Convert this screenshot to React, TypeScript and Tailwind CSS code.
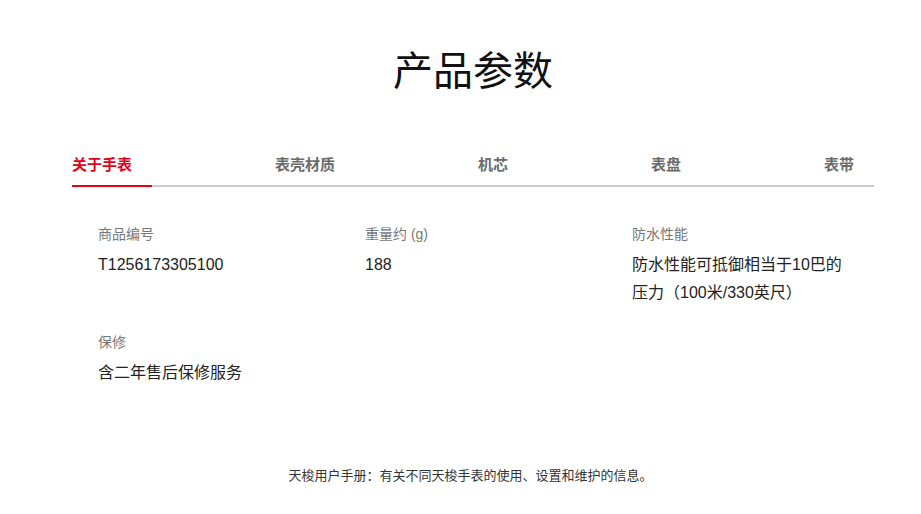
const TABS = ['关于手表', '表壳材质', '机芯', '表盘', '表带'];

const SPECS = [
  { label: '商品编号', value: 'T1256173305100' },
  { label: '重量约 (g)', value: '188' },
  { label: '防水性能', value: '防水性能可抵御相当于10巴的压力（100米/330英尺）' },
  { label: '保修', value: '含二年售后保修服务' },
];

export default function App() {
  return (
    <div
      className="min-h-[514px] w-full bg-white"
      style={{ fontFamily: '"Liberation Sans", Arial, "Noto Sans CJK SC", sans-serif' }}
    >
      <div className="ml-[72px] w-[802px]">
        {/* Title */}
        <h1 className="pt-[46px] text-center text-[40px] leading-[50px] font-normal text-[#111111]">
          产品参数
        </h1>

        {/* Tabs */}
        <div className="mt-[59px] flex justify-between border-b-2 border-[#cccccc]">
          {TABS.map((tab, i) => (
            <div
              key={tab}
              className={
                i === 0
                  ? '-mb-[2px] border-b-2 border-[#e2001a] pr-[20px] pb-[10px] text-[15px] leading-[20px] font-bold text-[#e2001a]'
                  : 'pr-[20px] pb-[10px] text-[15px] leading-[20px] font-bold text-[#6b6b6b]'
              }
            >
              {tab}
            </div>
          ))}
        </div>

        {/* Specs */}
        <div className="mt-[37px] grid grid-cols-[267px_267px_267px] gap-y-[25px] pl-[26px]">
          {SPECS.map(spec => (
            <div key={spec.label} className="pr-[44px]">
              <div className="text-[14px] leading-[20px] text-[#777777]">{spec.label}</div>
              <div className="mt-[7px] text-[16px] leading-[28px] text-[#222222]">{spec.value}</div>
            </div>
          ))}
        </div>

        {/* Footer note */}
        <p className="mt-[79px] pr-[5px] text-center text-[13px] leading-[20px] text-[#333333]">
          天梭用户手册：有关不同天梭手表的使用、设置和维护的信息。
        </p>
      </div>
    </div>
  );
}
